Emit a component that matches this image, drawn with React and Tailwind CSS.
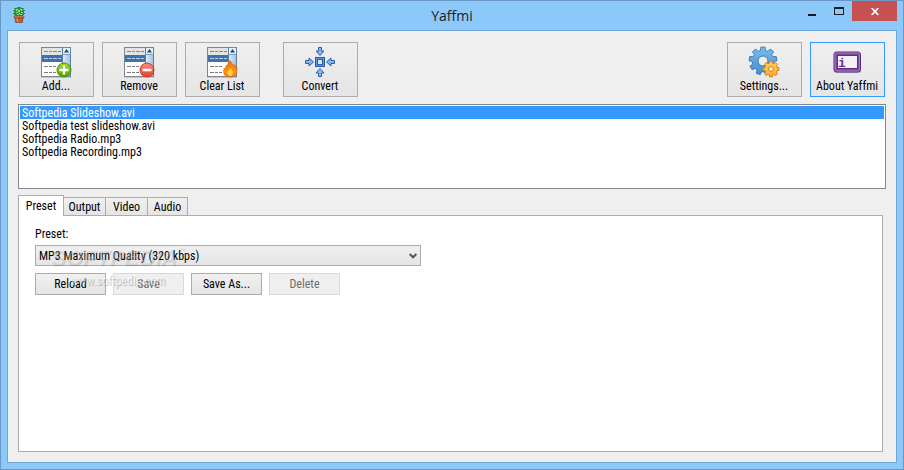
import React, { useState } from 'react';

const files = [
    'Softpedia Slideshow.avi',
    'Softpedia test slideshow.avi',
    'Softpedia Radio.mp3',
    'Softpedia Recording.mp3',
];

const tabs = ['Preset', 'Output', 'Video', 'Audio'];

const presets = ['MP3 Maximum Quality (320 kbps)', 'MP3 Standard Quality (192 kbps)'];

const CactusIcon = () => (
    <svg width="12" height="16" viewBox="0 0 12 16" aria-hidden="true">
        <path d="M2 1h2V0h4v1h2v2h1v5h-1v2H2V8H1V3h1z" fill="#2f8f3c" />
        <path d="M3 2h2v1H3zM7 2h2v1H7zM5 3h2v2H5zM3 5h2v1H3zM8 5h2v1H8zM4 7h2v1H4zM7 7h2v1H7zM3 3h1v1H3zM8 3h1v1H8zM6 6h1v1H6z" fill="#8be58a" />
        <path d="M0 3h1v1H0zM11 3h1v1h-1zM0 6h1v1H0zM11 6h1v1h-1zM1 1h1v1H1zM10 1h1v1h-1z" fill="#2f8f3c" />
        <path d="M1 9h10v2H1z" fill="#d98a55" stroke="#7d3f1c" strokeWidth="0.6" />
        <path d="M2 11h8l-.6 4.5H2.6z" fill="#b8622f" stroke="#6d3415" strokeWidth="0.6" />
        <path d="M3.3 11.5h1.4l.3 3.5H4z" fill="#e09a68" />
    </svg>
);

// List box picture shared by Add, Remove and Clear
const ListIcon = ({ children }) => (
    <svg width="32" height="32" viewBox="0 0 32 32" aria-hidden="true">
        <defs>
            <linearGradient id="listScroll" x1="0" x2="1" y1="0" y2="0">
                <stop offset="0" stopColor="#e2eefa" />
                <stop offset="1" stopColor="#a6c4e0" />
            </linearGradient>
            <linearGradient id="addFill" x1="0" x2="0" y1="0" y2="1">
                <stop offset="0" stopColor="#a5dc2c" />
                <stop offset="1" stopColor="#4f9e08" />
            </linearGradient>
            <linearGradient id="removeFill" x1="0" x2="0" y1="0" y2="1">
                <stop offset="0" stopColor="#ff8a78" />
                <stop offset="1" stopColor="#e0402c" />
            </linearGradient>
            <linearGradient id="flameFill" x1="0" x2="0" y1="0" y2="1">
                <stop offset="0" stopColor="#f36a0c" />
                <stop offset="0.7" stopColor="#ff9a10" />
                <stop offset="1" stopColor="#f07808" />
            </linearGradient>
        </defs>
        <rect x="1" y="3" width="30" height="29" fill="#000" opacity="0.15" />
        <rect x="1.5" y="1.5" width="29" height="29" fill="#fff" stroke="#7d8791" />
        <rect x="2" y="2" width="20" height="7" fill="#e3e3e3" />
        <rect x="2" y="9" width="20" height="7" fill="#3f72a8" />
        <rect x="22" y="2" width="8" height="28" fill="url(#listScroll)" />
        <path d="M22.5 1.5v29M30.5 1.5v29" stroke="#5b7fa5" fill="none" />
        <path d="M22.5 8.5h8" stroke="#7d9dbf" fill="none" />
        <rect x="23" y="2" width="7" height="6" fill="#e4f0fb" />
        <path d="M26.5 3l2.5 3.5h-5z" fill="#24466e" />
        <path d="M4 5.5h4M9 5.5h3M13 5.5h4M18 5.5h3" stroke="#858585" />
        <path d="M4 12.5h4M9 12.5h3M13 12.5h4M18 12.5h3" stroke="#b9d2ea" />
        <path d="M4 20.5h4M9 20.5h3M13 20.5h3M4 26.5h4M9 26.5h3M13 26.5h3" stroke="#7c7c7c" />
        {children}
    </svg>
);

const AddIcon = () => (
    <ListIcon>
        <circle cx="24" cy="24" r="7" fill="url(#addFill)" stroke="#4a9108" />
        <path d="M24 19.5v9M19.5 24h9" stroke="#fff" strokeWidth="2.4" />
    </ListIcon>
);

const RemoveIcon = () => (
    <ListIcon>
        <circle cx="24" cy="24" r="7" fill="url(#removeFill)" stroke="#c93a2a" />
        <path d="M19.5 24h9" stroke="#fff" strokeWidth="2.6" />
    </ListIcon>
);

const ClearIcon = () => (
    <ListIcon>
        <path
            d="M24 14.5c.6 1.8 3.2 3.4 3.4 5.8.6-.4.8-1 .9-1.9 1.5 1.8 1.2 3.4 1.3 4.5.6-.2.9-.6 1.2-1.1.7 4.5-.4 9.2-6.6 9.2-6.5 0-7.3-4.9-5.9-9 .4.8.8 1.2 1.5 1.4-.3-1.7.1-3.6 1.3-4.6.1.7.4 1.2.9 1.4-.3-2.2.4-4.4 2-5.7z"
            fill="url(#flameFill)"
            stroke="#dd6a08"
            strokeWidth="0.8"
        />
        <path d="M24.3 22c1.7 1.8 3.2 3.4 2.5 5.6-.4 1.5-1.3 2.4-2.5 2.4-1.5 0-2.7-1-2.8-2.7-.1-2 2.2-3.2 2.8-5.3z" fill="#ffd04a" />
    </ListIcon>
);

const ConvertIcon = () => (
    <svg width="32" height="32" viewBox="0 0 32 32" aria-hidden="true">
        <rect x="11.5" y="11.5" width="9" height="9" fill="#5f9ae6" stroke="#2a55a0" />
        <rect x="13.5" y="13.5" width="5" height="5" fill="#d3e6fb" stroke="#2a55a0" />
        <g fill="#86b6f2" stroke="#2f5fa8" strokeLinejoin="round">
            {[0, 90, 180, 270].map((angle) => (
                <path key={angle} d="M14.5 1.5h3V5H20l-4 4.500L12 5h2.500z" transform={`rotate(${angle} 16 16)`} />
            ))}
        </g>
    </svg>
);

const Gear = ({ cx, cy, r, hole, teeth, fill, stroke, inner }) => {
    const points = [];
    for (let i = 0; i < teeth; i++) {
        [[-0.32, 0.77], [-0.22, 1], [0.22, 1], [0.32, 0.77]].forEach(([t, k]) => {
            const a = ((i + t) / teeth) * Math.PI * 2 - Math.PI / 2;
            points.push(`${cx + Math.cos(a) * r * k},${cy + Math.sin(a) * r * k}`);
        });
    }
    return (
        <g stroke={stroke} strokeLinejoin="round">
            <polygon points={points.join(' ')} fill={fill} />
            <circle cx={cx} cy={cy} r={hole} fill={inner} />
        </g>
    );
};

const SettingsIcon = () => (
    <svg width="32" height="32" viewBox="0 0 32 32" aria-hidden="true">
        <defs>
            <linearGradient id="gearBlue" x1="0" x2="0" y1="0" y2="1">
                <stop offset="0" stopColor="#7cbcec" />
                <stop offset="1" stopColor="#3f8fd0" />
            </linearGradient>
            <linearGradient id="gearOrange" x1="0" x2="0" y1="0" y2="1">
                <stop offset="0" stopColor="#ffd250" />
                <stop offset="1" stopColor="#ffab2e" />
            </linearGradient>
        </defs>
        <Gear cx={15} cy={15} r={14} hole={5} teeth={9} fill="url(#gearBlue)" stroke="#3a7fb8" inner="#ececec" />
        <Gear cx={23} cy={23} r={8} hole={2.5} teeth={8} fill="url(#gearOrange)" stroke="#dc7a14" inner="#f6e8dc" />
    </svg>
);

const AboutIcon = () => (
    <svg width="32" height="32" viewBox="0 0 32 32" aria-hidden="true">
        <rect x="3" y="7" width="27" height="20" rx="2.5" fill="#000" opacity="0.2" />
        <rect x="3" y="6" width="26.5" height="20" rx="2.5" fill="#7b4a9e" stroke="#55277c" />
        <rect x="4" y="7" width="24.5" height="18" rx="1.5" fill="none" stroke="#b48fd0" strokeWidth="0.8" />
        <rect x="6.5" y="9.5" width="20" height="13" fill="#f3f1f5" stroke="#5d3182" />
        <text x="7" y="21" fontFamily="Liberation Mono" fontWeight="700" fontSize="13" fill="#6a3593">i</text>
    </svg>
);

const ToolButton = ({ icon, label, highlighted }) => (
    <button
        type="button"
        className={`flex h-[55px] w-[75px] shrink-0 flex-col items-center border bg-linear-to-b from-[#efefef] to-[#e5e5e5] pt-[3px] pr-px ${
            highlighted ? 'border-[#3399ff]' : 'border-[#acacac]'
        }`}
    >
        {icon}
        <span className="leading-4 whitespace-nowrap">{label}</span>
    </button>
);

const PushButton = ({ children, disabled }) => (
    <button
        type="button"
        disabled={disabled}
        className="h-[22px] w-[71px] border border-[#acacac] bg-linear-to-b from-[#f0f0f0] to-[#e5e5e5] disabled:border-[#d9d9d9] disabled:from-[#efefef] disabled:to-[#efefef] disabled:text-[#6d6d6d]"
    >
        {children}
    </button>
);

const TitleBar = () => (
    <header className="grid h-[29px] grid-cols-[1fr_auto_1fr] items-start">
        <div className="pt-[6px] pl-[6px]">
            <CactusIcon />
        </div>
        <h1 className="font-['Open_Sans',sans-serif] text-[14px] leading-[29px] text-[#222]">Yaffmi</h1>
        <div className="flex justify-end">
            <button type="button" aria-label="Minimize" className="flex h-5 w-[27px] items-center justify-center">
                <svg width="8" height="10" viewBox="0 0 8 10"><path d="M0 8h8v2H0z" fill="#1c1c1c" /></svg>
            </button>
            <button type="button" aria-label="Maximize" className="flex h-5 w-[27px] items-center justify-center">
                <svg width="10" height="8" viewBox="0 0 10 8"><path d="M0 0h10v8H0zM1 2v5h8V2z" fill="#1c1c1c" fillRule="evenodd" /></svg>
            </button>
            <button type="button" aria-label="Close" className="flex h-5 w-[45px] items-center justify-center bg-[#c75050]">
                <svg width="8" height="7" viewBox="0 0 8 7"><path d="M.7 0l6.6 7M7.3 0L.7 7" stroke="#fff" strokeWidth="1.7" /></svg>
            </button>
        </div>
    </header>
);

const PresetPanel = () => (
    <div className="relative px-4 pt-3">
        <label htmlFor="preset" className="block leading-[13px]">Preset:</label>
        <div className="relative mt-1 max-w-[386px]">
            <select
                id="preset"
                className="h-[21px] w-full appearance-none border border-[#acacac] bg-linear-to-b from-[#f0f0f0] to-[#e5e5e5] pl-[3px]"
            >
                {presets.map((preset) => (
                    <option key={preset}>{preset}</option>
                ))}
            </select>
            <svg width="8" height="6" viewBox="0 0 8 6" className="pointer-events-none absolute top-2 right-1">
                <path d="M.7 1L4 4.3 7.3 1" fill="none" stroke="#555" strokeWidth="2" />
            </svg>
        </div>
        <div className="mt-[7px] flex gap-[7px]">
            <PushButton>Reload</PushButton>
            <PushButton disabled>Save</PushButton>
            <PushButton>Save As...</PushButton>
            <PushButton disabled>Delete</PushButton>
        </div>

        {/* watermark */}
        <div aria-hidden="true" className="pointer-events-none absolute top-[30px] left-8 w-[134px]">
            <p className="flex font-['Liberation_Sans',sans-serif] text-[22px] leading-6 font-bold text-white/25 italic [text-shadow:1px_1px_1px_rgb(0_0_0/0.14)]">
                SOFTPEDIA<span className="text-[8px] leading-[10px]">™</span>
            </p>
            <p className="pt-[3px] text-center leading-4 text-white/60 [text-shadow:1px_1px_1px_rgb(0_0_0/0.25)]">www.softpedia.com</p>
        </div>
    </div>
);

export default function App() {
    const [selected, setSelected] = useState(0);
    const [activeTab, setActiveTab] = useState('Preset');

    return (
        <div className="flex min-h-screen flex-col border border-[#6a97c3] bg-[#8dc8fa] px-[6px] pb-[6px] font-['Roboto_Condensed','Roboto',sans-serif] text-[12px] text-black">
            <TitleBar />
            <main className="flex flex-1 flex-col border border-[#73a6d6] bg-[#efefef] px-[10px] pt-[11px] pb-[10px]">
                <div className="flex justify-between px-px">
                    <div className="flex gap-2">
                        <ToolButton icon={<AddIcon />} label="Add..." />
                        <ToolButton icon={<RemoveIcon />} label="Remove" />
                        <ToolButton icon={<ClearIcon />} label="Clear List" />
                        <div className="pl-[15px]">
                            <ToolButton icon={<ConvertIcon />} label="Convert" />
                        </div>
                    </div>
                    <div className="flex gap-2">
                        <ToolButton icon={<SettingsIcon />} label="Settings..." />
                        <ToolButton icon={<AboutIcon />} label="About Yaffmi" highlighted />
                    </div>
                </div>

                <ul role="listbox" aria-label="Files" className="mt-[7px] h-[85px] overflow-y-auto border border-[#828790] bg-white p-px">
                    {files.map((file, index) => (
                        <li
                            key={file}
                            role="option"
                            aria-selected={selected === index}
                            onClick={() => setSelected(index)}
                            className={`h-[13px] cursor-default px-[2px] leading-[15px] ${selected === index ? 'bg-[#3399ff] text-white' : ''}`}
                        >
                            {file}
                        </li>
                    ))}
                </ul>

                <div role="tablist" className="mt-[6px] flex h-5 items-end">
                    {tabs.map((tab) => (
                        <button
                            key={tab}
                            type="button"
                            role="tab"
                            aria-selected={activeTab === tab}
                            onClick={() => setActiveTab(tab)}
                            className={
                                activeTab === tab
                                    ? 'relative -mb-px h-[21px] w-[46px] border border-b-0 border-[#acacac] bg-white pb-px'
                                    : '-ml-px h-[18px] w-[43px] border border-b-0 border-[#acacac] bg-linear-to-b from-[#f0f0f0] to-[#e5e5e5] last:w-[41px]'
                            }
                        >
                            {tab}
                        </button>
                    ))}
                </div>
                <section role="tabpanel" className="mr-[3px] flex-1 border border-[#acacac] bg-white">
                    {activeTab === 'Preset' && <PresetPanel />}
                </section>
            </main>
        </div>
    );
}
